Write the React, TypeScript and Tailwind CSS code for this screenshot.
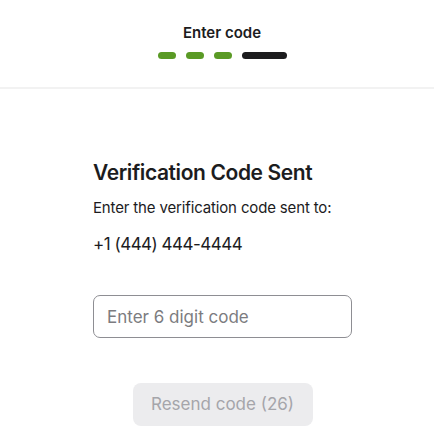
export default function App() {
  return (
    <div className="min-h-[447px] w-full bg-white font-['Inter',sans-serif] text-[#1c1c1e]">
      <header className="flex flex-col items-center pl-[10px] pt-[23px] pb-[28px] border-b-2 border-[#f2f2f2]">
        <h1 className="text-[15px] font-semibold leading-[20px]">Enter code</h1>
        <div className="mt-[9px] flex items-center gap-[10px]">
          <span className="block h-[7px] w-[18px] rounded-full bg-[#5a9a25]" />
          <span className="block h-[7px] w-[18px] rounded-full bg-[#5a9a25]" />
          <span className="block h-[7px] w-[18px] rounded-full bg-[#5a9a25]" />
          <span className="block h-[7px] w-[45px] rounded-full bg-[#1c1c1e]" />
        </div>
      </header>

      <main className="pl-[93px] pr-[82px] pt-[70px]">
        <h2 className="text-[21px] font-semibold leading-[28px] tracking-[-0.4px]">Verification Code Sent</h2>
        <p className="mt-[11px] text-[15px] leading-[20px] tracking-[-0.15px]">Enter the verification code sent to:</p>
        <p className="mt-[14px] text-[17px] leading-[24px] tracking-[-0.5px]">+1 (444) 444-4444</p>

        <input
          type="text"
          placeholder="Enter 6 digit code"
          className="mt-[39px] block h-[43px] w-[259px] rounded-[7px] border border-[#8e8e93] px-[13px] text-[17px] outline-none placeholder:text-[#7c7c80]"
        />

        <div className="mt-[45px] flex justify-center">
          <button
            type="button"
            disabled
            className="h-[43px] w-[180px] rounded-[8px] bg-[#ececee] text-[17px] text-[#a5a5aa]"
          >
            Resend code (26)
          </button>
        </div>
      </main>
    </div>
  );
}
